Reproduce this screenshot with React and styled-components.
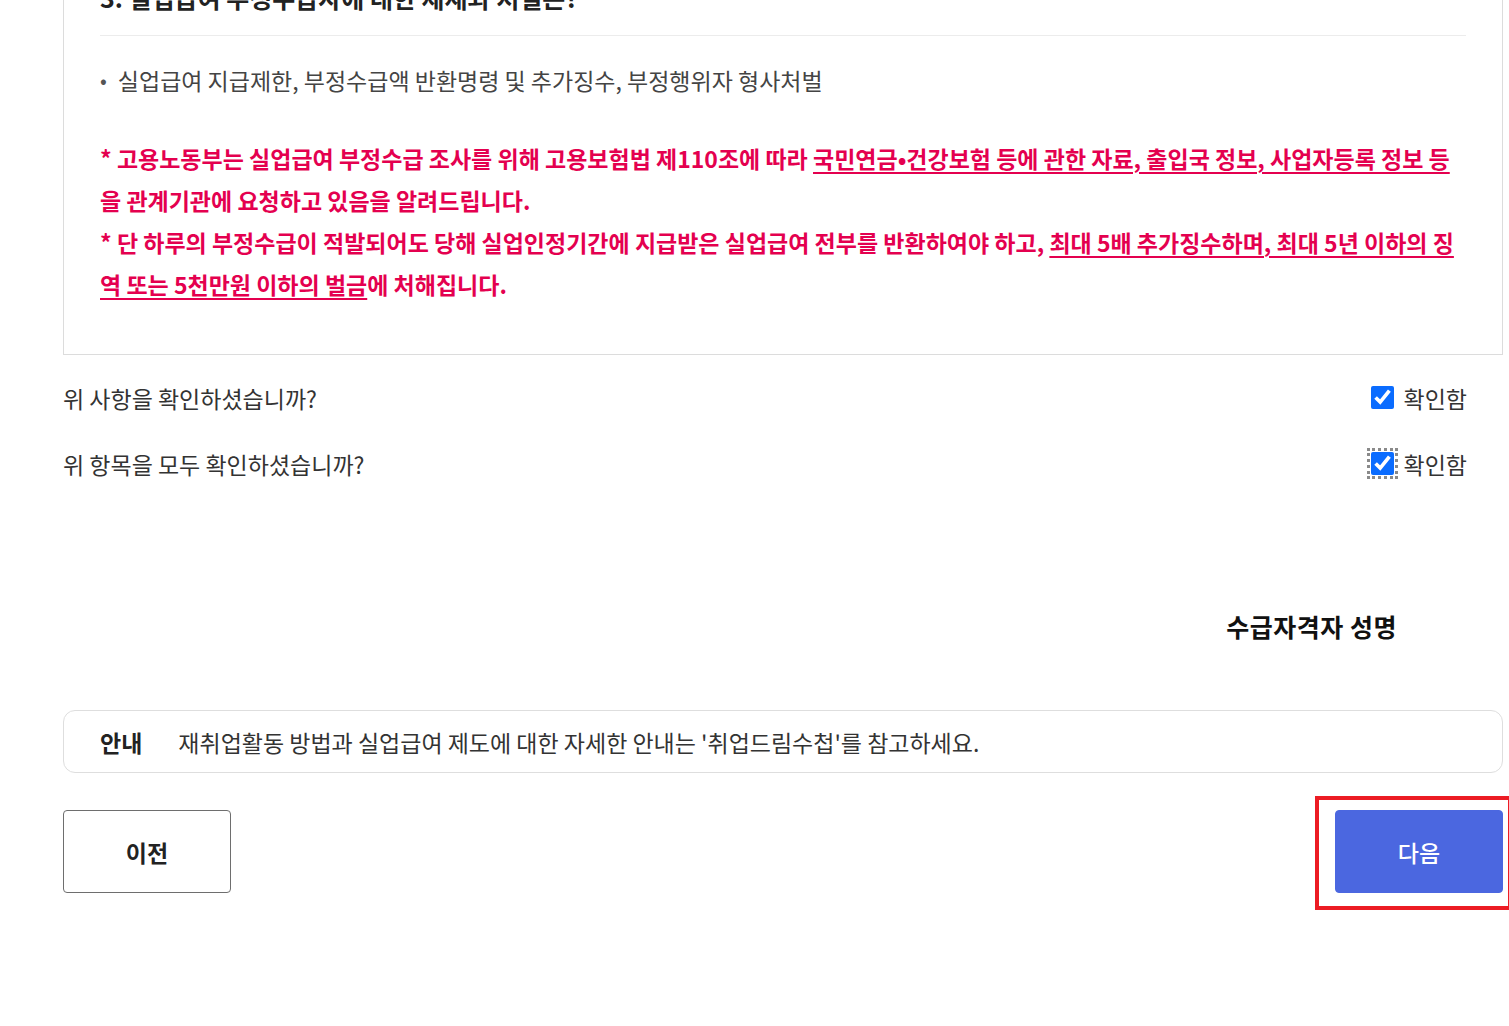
import React from "react";
import styled, { createGlobalStyle } from "styled-components";

const GlobalStyle = createGlobalStyle`
  html, body {
    margin: 0;
    padding: 0;
    background: #fff;
  }
  body {
    font-family: "Noto Sans CJK KR", "Noto Sans", sans-serif;
    color: #222;
    overflow: hidden;
  }
`;

const Page = styled.div`
  width: 1440px;
  margin: -62px 0 0 63px;
  padding-bottom: 120px;
`;

const Panel = styled.section`
  border: 1px solid #dcdcdc;
  padding: 0 36px 49px 36px;
`;

const PanelTitle = styled.h3`
  margin: 0;
  padding: 40px 0 20px;
  font-size: 25px;
  font-weight: 700;
  line-height: 36px;
  color: #222;
  border-bottom: 1px solid #ececec;
`;

const BulletList = styled.ul`
  list-style: none;
  margin: 0;
  padding: 28px 0 0;
`;

const BulletItem = styled.li`
  display: flex;
  align-items: center;
  gap: 11px;
  font-size: 23px;
  line-height: 32px;
  color: #444;

  &::before {
    content: "•";
    color: #555;
    font-size: 20px;
  }
`;

const Notice = styled.div`
  margin-top: 41px;
  color: #e4004f;
  font-size: 23px;
  font-weight: 700;
  line-height: 42px;

  p {
    margin: 0;
  }

  u {
    text-decoration-thickness: 2px;
    text-underline-offset: 4px;
  }
`;

const Questions = styled.div`
  display: flex;
  flex-direction: column;
  padding-top: 26px;
  padding-right: 36px;
`;

const QuestionRow = styled.div`
  display: flex;
  align-items: center;
  justify-content: space-between;
  height: 33px;
  margin-bottom: 33px;
  font-size: 23px;
  color: #333;
`;

const CheckLabel = styled.label`
  display: flex;
  align-items: center;
  gap: 10px;
  font-size: 23px;
  color: #333;
`;

const CheckBox = styled.input.attrs({ type: "checkbox" })`
  width: 23px;
  height: 23px;
  margin: 0;
  accent-color: #0a6cff;
  outline: ${(p) => (p.$focused ? "3px dotted #8a8a8a" : "none")};
  outline-offset: 1px;
`;

const SignRow = styled.div`
  display: flex;
  justify-content: flex-end;
  padding: 95px 106px 0 0;
  font-size: 25px;
  font-weight: 700;
  letter-spacing: 0.5px;
  color: #111;
  line-height: 36px;
`;

const InfoBox = styled.div`
  display: flex;
  align-items: center;
  gap: 36px;
  height: 63px;
  box-sizing: border-box;
  margin-top: 66px;
  padding: 0 36px;
  border: 1px solid #dedede;
  border-radius: 12px;
  font-size: 23px;
  color: #333;

  strong {
    font-weight: 700;
    color: #222;
  }
`;

const ButtonRow = styled.div`
  display: flex;
  justify-content: space-between;
  margin-top: 37px;
`;

const Button = styled.button`
  position: relative;
  width: 168px;
  height: 83px;
  border-radius: 4px;
  font-family: "Noto Sans CJK KR", sans-serif;
  font-size: 23px;
  cursor: pointer;
  border: 1px solid ${(p) => (p.$primary ? "#4b67e0" : "#6e6e6e")};
  background: ${(p) => (p.$primary ? "#4b67e0" : "#fff")};
  color: ${(p) => (p.$primary ? "#fff" : "#222")};
  font-weight: ${(p) => (p.$primary ? 500 : 700)};
`;

const Highlight = styled.span`
  position: absolute;
  top: -15px;
  left: -21px;
  right: -10px;
  bottom: -18px;
  border: 4px solid #ec1c24;
  pointer-events: none;
`;

export default function App() {
  return (
    <>
      <GlobalStyle />
      <Page>
        <Panel>
          <PanelTitle>3. 실업급여 부정수급자에 대한 제재와 처벌은?</PanelTitle>
          <BulletList>
            <BulletItem>실업급여 지급제한, 부정수급액 반환명령 및 추가징수, 부정행위자 형사처벌</BulletItem>
          </BulletList>
          <Notice>
            <p>
              * 고용노동부는 실업급여 부정수급 조사를 위해 고용보험법 제110조에 따라{" "}
              <u>국민연금•건강보험 등에 관한 자료, 출입국 정보, 사업자등록 정보 등</u>을 관계기관에
              요청하고 있음을 알려드립니다.
            </p>
            <p>
              * 단 하루의 부정수급이 적발되어도 당해 실업인정기간에 지급받은 실업급여 전부를 반환하여야 하고,{" "}
              <u>최대 5배 추가징수하며, 최대 5년 이하의 징역 또는 5천만원 이하의 벌금</u>에 처해집니다.
            </p>
          </Notice>
        </Panel>

        <Questions>
          <QuestionRow>
            <span>위 사항을 확인하셨습니까?</span>
            <CheckLabel>
              <CheckBox defaultChecked />
              확인함
            </CheckLabel>
          </QuestionRow>
          <QuestionRow>
            <span>위 항목을 모두 확인하셨습니까?</span>
            <CheckLabel>
              <CheckBox defaultChecked $focused />
              확인함
            </CheckLabel>
          </QuestionRow>
        </Questions>

        <SignRow>수급자격자 성명</SignRow>

        <InfoBox>
          <strong>안내</strong>
          <span>재취업활동 방법과 실업급여 제도에 대한 자세한 안내는 '취업드림수첩'를 참고하세요.</span>
        </InfoBox>

        <ButtonRow>
          <Button>이전</Button>
          <Button $primary>
            다음
            <Highlight />
          </Button>
        </ButtonRow>
      </Page>
    </>
  );
}
